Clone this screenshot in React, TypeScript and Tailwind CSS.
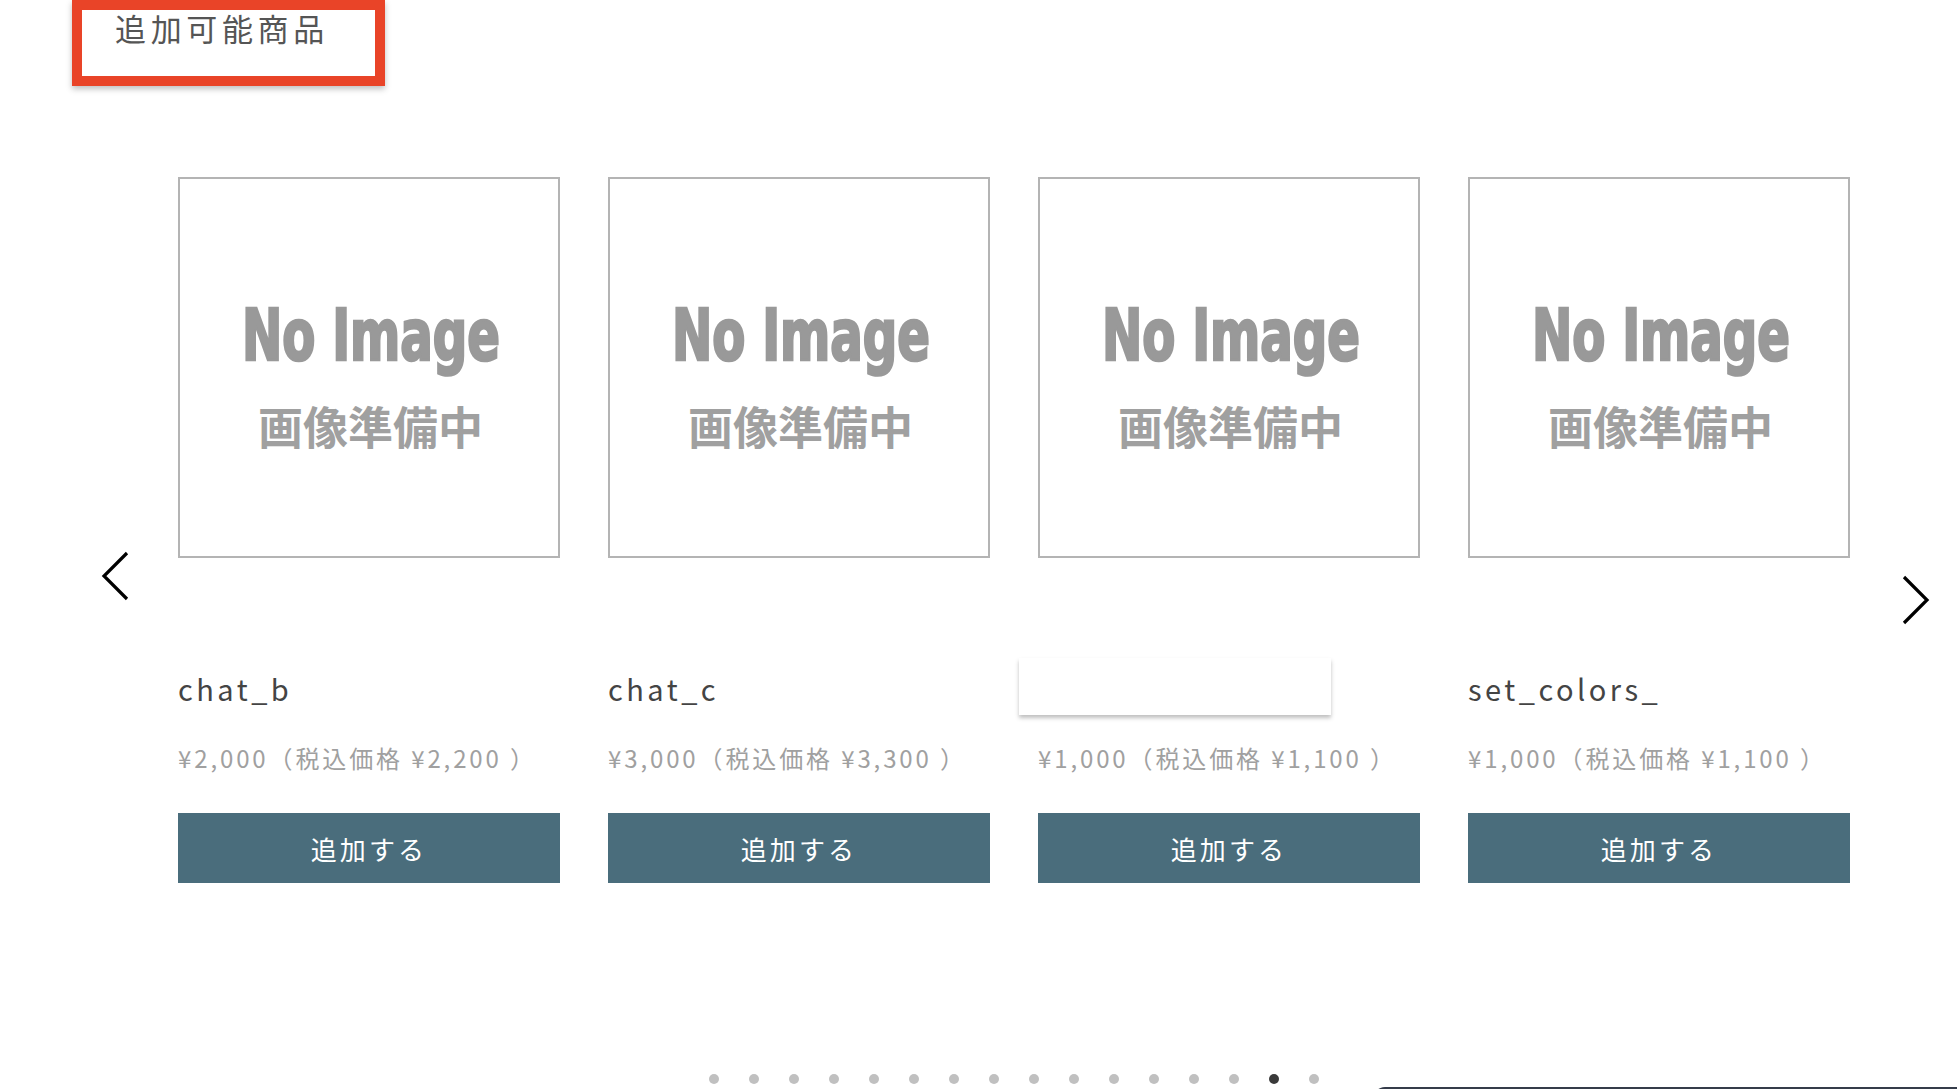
import React from "react";

type Product = { name: string | null; price: string; tax: string };

const products: Product[] = [
  { name: "chat_b", price: "¥2,000", tax: "¥2,200" },
  { name: "chat_c", price: "¥3,000", tax: "¥3,300" },
  { name: null, price: "¥1,000", tax: "¥1,100" },
  { name: "set_colors_", price: "¥1,000", tax: "¥1,100" },
];

const jp = "font-['Noto_Sans_CJK_JP','Noto_Sans',sans-serif]";

/** Placeholder picture shown when the product has no image */
function NoImage() {
  return (
    <div className="h-[381px] w-full border-2 border-[#b4b4b4] bg-white">
      <svg viewBox="0 0 378 377" className="h-full w-full">
        <text
          transform="translate(62 181) scale(1 1.3)"
          x="0"
          y="0"
          textLength="258"
          lengthAdjust="spacingAndGlyphs"
          fill="#999999"
          stroke="#999999"
          strokeWidth="2"
          fontSize="55"
          fontWeight="bold"
          fontFamily="'DejaVu Sans Condensed','Liberation Sans Narrow','Liberation Sans',sans-serif"
        >
          No Image
        </text>
        <text
          x="78"
          y="266"
          textLength="225"
          lengthAdjust="spacingAndGlyphs"
          fill="#a0a0a0"
          fontSize="45"
          fontWeight="bold"
          fontFamily="'Noto Sans CJK JP',sans-serif"
        >
          画像準備中
        </text>
      </svg>
    </div>
  );
}

function ProductCard({ p }: { p: Product }) {
  return (
    <div className="flex w-[382px] shrink-0 flex-col">
      <NoImage />
      {/* Name row */}
      <div className="mt-[100px] h-[57px]">
        {p.name ? (
          <p className="pt-[2px] text-[29px] leading-[57px] tracking-[0.12em] text-[#444]">
            {p.name}
          </p>
        ) : (
          <div className="-ml-[19px] h-[57px] w-[312px] bg-white shadow-[0_3px_4px_rgba(0,0,0,0.25)]" />
        )}
      </div>
      <p className="mt-[27px] whitespace-nowrap text-[24px] leading-[32px] tracking-[0.12em] text-[#a0a0a0]">
        {p.price}（税込価格 {p.tax} ）
      </p>
      <button className="mt-[39px] h-[70px] w-full bg-[#4a6d7c] text-[26px] tracking-[0.12em] text-white">
        追加する
      </button>
    </div>
  );
}

export default function App() {
  const dots = Array.from({ length: 16 }, (_, i) => i);

  return (
    <div className={`min-h-screen overflow-hidden bg-white ${jp}`}>
      {/* Section title */}
      <div className="ml-[72px] h-[86px] w-[313px] border-[10px] border-[#e94428] pl-[33px] pt-[2px] shadow-[0_3px_6px_rgba(0,0,0,0.25)]">
        <h2 className="text-[31px] leading-none tracking-[0.15em] text-[#555]">追加可能商品</h2>
      </div>

      {/* Carousel */}
      <div className="relative mt-[91px]">
        <button className="absolute left-[98px] top-[372px]">
          <svg width="34" height="54" viewBox="0 0 34 54" fill="none" stroke="#000" strokeWidth="3.2">
            <path d="M29 4 L6 27 L29 50" />
          </svg>
        </button>
        <button className="absolute left-[1898px] top-[396px]">
          <svg width="34" height="54" viewBox="0 0 34 54" fill="none" stroke="#000" strokeWidth="3.2">
            <path d="M6 4 L29 27 L6 50" />
          </svg>
        </button>

        <div className="flex gap-[48px] pl-[178px]">
          {products.map((p, i) => (
            <ProductCard key={i} p={p} />
          ))}
        </div>

        {/* Pagination dots */}
        <div className="mt-[191px] flex w-[1850px] justify-center gap-[30px] pl-[178px]">
          {dots.map((d) => (
            <span
              key={d}
              className={
                d === 14
                  ? "h-[10px] w-[10px] rounded-full bg-[#3a3a3a]"
                  : "h-[10px] w-[10px] rounded-full bg-[#c0c0c0]"
              }
            />
          ))}
        </div>
      </div>

      {/* Bottom panel edge */}
      <div className="mt-[3px] flex">
        <div className="ml-[1373px] h-[20px] flex-1 rounded-tl-[12px] bg-[#353c4a]" />
      </div>
    </div>
  );
}
